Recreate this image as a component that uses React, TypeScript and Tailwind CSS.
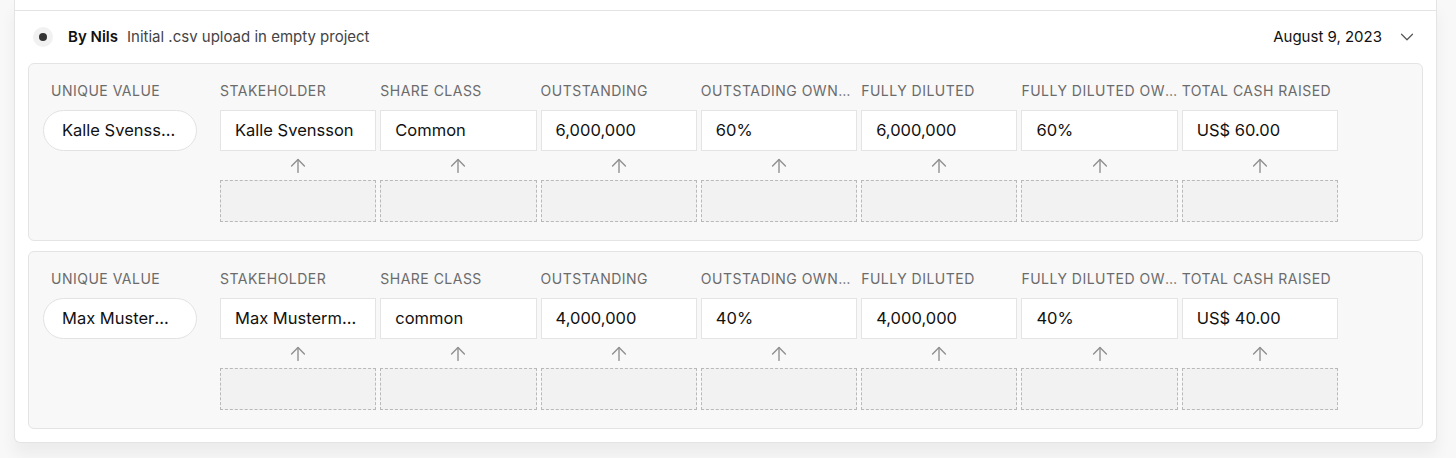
import { ArrowUp, ChevronDown } from 'lucide-react'

interface Row {
  unique: string
  values: string[]
}

const columns = [
  'Stakeholder',
  'Share class',
  'Outstanding',
  'Outstading ownership',
  'Fully diluted',
  'Fully diluted ownership',
  'Total cash raised',
]

const rows: Row[] = [
  {
    unique: 'Kalle Svensson',
    values: ['Kalle Svensson', 'Common', '6,000,000', '60%', '6,000,000', '60%', 'US$ 60.00'],
  },
  {
    unique: 'Max Mustermann',
    values: ['Max Mustermann', 'common', '4,000,000', '40%', '4,000,000', '40%', 'US$ 40.00'],
  },
]

function MappingRow({ row }: { row: Row }) {
  return (
    <div className="flex rounded-md border border-[#e4e4e4] bg-[#f8f8f8] pb-[18px] pl-[14px] pt-[17px]">
      <div className="w-[154px] shrink-0">
        <p className="h-5 truncate pl-2 text-sm uppercase leading-5 tracking-[0.035em] text-[#6b6b6b]">Unique value</p>
        <div className="mt-[9px] flex h-[41px] items-center rounded-full border border-[#e2e2e2] bg-white pl-[18px] pr-[20px]">
          <span className="truncate text-[16.5px] text-[#111]">{row.unique}</span>
        </div>
      </div>

      <div className="ml-[23px] grid w-[1118px] grid-cols-7 gap-x-[4px]">
        {columns.map((col, i) => (
          <div key={col} className="min-w-0">
            <p className="h-5 truncate text-sm uppercase leading-5 tracking-[0.035em] text-[#6b6b6b]">{col}</p>
            <div className="mt-[9px] flex h-[41px] items-center border border-[#e4e4e4] bg-white px-[14px]">
              <span className="truncate text-[16.5px] text-[#111]">{row.values[i]}</span>
            </div>
            <div className="flex h-[29px] items-center justify-center">
              <ArrowUp className="h-[22px] w-[22px] text-[#8f8f8f]" strokeWidth={1.5} />
            </div>
            <div className="h-[42px] border border-dashed border-[#b9b9b9] bg-[#f2f2f2]" />
          </div>
        ))}
      </div>
    </div>
  )
}

export default function App() {
  return (
    <div className="h-[458px] overflow-hidden bg-[#f8f8f8] font-['Inter',sans-serif] antialiased">
      <div className="ml-[14px] mr-[19px] rounded-b-md border-x border-b border-[#e4e4e4] bg-white pt-[10px] shadow-[0_12px_16px_rgba(0,0,0,0.05)]">
        <div className="border-t border-[#e4e4e4] px-[13px] pb-[13px]">
          <div className="flex h-[52px] items-center">
            <div className="ml-[5px] flex h-5 w-5 items-center justify-center rounded-full bg-[#f1f1f1]">
              <div className="h-2 w-2 rounded-full bg-[#333]" />
            </div>
            <span className="ml-[15px] text-[15px] font-semibold text-[#111]">By Nils</span>
            <span className="ml-[9px] text-[15px] text-[#444]">Initial .csv upload in empty project</span>
            <span className="ml-auto text-[15px] text-[#111]">August 9, 2023</span>
            <ChevronDown className="ml-[14px] mr-[5px] h-[22px] w-[22px] text-[#555]" strokeWidth={1.3} />
          </div>

          <div className="flex flex-col gap-[10px]">
            {rows.map((row) => (
              <MappingRow key={row.unique} row={row} />
            ))}
          </div>
        </div>
      </div>
    </div>
  )
}
